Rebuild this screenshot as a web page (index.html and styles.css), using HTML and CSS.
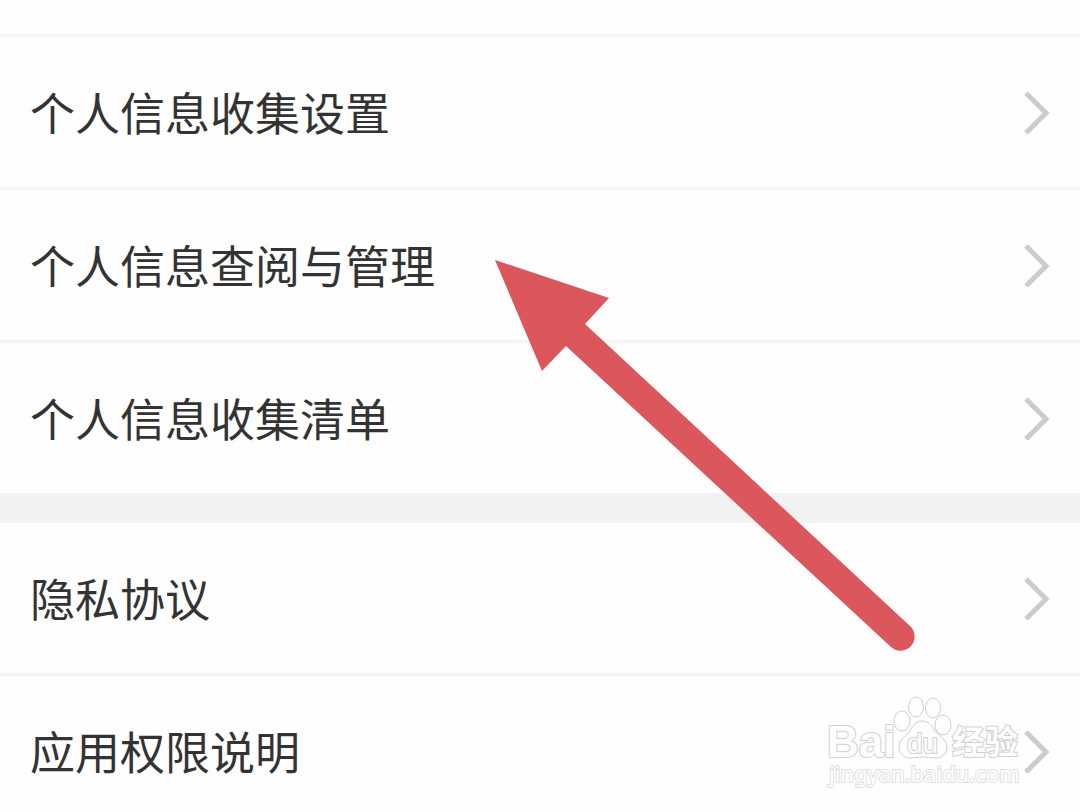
FILE: index.html
```html
<!DOCTYPE html>
<html lang="zh-CN">
<head>
    <meta charset="UTF-8">
    <meta name="viewport" content="width=device-width, initial-scale=1.0">
    <title>隐私设置</title>
    <link rel="stylesheet" href="styles.css">
</head>
<body>
    <svg class="symbols" aria-hidden="true">
        <symbol id="chevron" viewBox="0 0 26 44">
            <path d="M2 3 L22 23 L2 43" fill="none" stroke="#cccccc" stroke-width="5"/>
        </symbol>
    </svg>

    <nav class="settings">
        <div class="group">
            <a class="row" href="#collect">个人信息收集设置<svg class="chevron"><use href="#chevron"/></svg></a>
            <a class="row" href="#manage">个人信息查阅与管理<svg class="chevron"><use href="#chevron"/></svg></a>
            <a class="row" href="#list">个人信息收集清单<svg class="chevron"><use href="#chevron"/></svg></a>
        </div>
        <div class="group">
            <a class="row" href="#privacy">隐私协议<svg class="chevron"><use href="#chevron"/></svg></a>
            <a class="row" href="#permissions">应用权限说明<svg class="chevron"><use href="#chevron"/></svg></a>
        </div>
    </nav>

    <svg class="arrow" viewBox="0 0 420 392" aria-hidden="true">
        <path d="M0 0 L114 38 L90 64 L415 366 A14 14 0 0 1 396 387 L71 86 L47 111 Z" fill="#db575c"/>
    </svg>

    <svg class="watermark" viewBox="0 0 200 96" role="img" aria-label="Baidu 经验">
        <text class="mark-bai" x="-1" y="61">Bai</text>
        <ellipse cx="74" cy="25" rx="8" ry="10"/>
        <ellipse cx="88" cy="11" rx="7.5" ry="10"/>
        <ellipse cx="105" cy="12" rx="7.5" ry="10"/>
        <ellipse cx="115" cy="29" rx="8" ry="10"/>
        <path d="M94 25 C86 25 84 33 79 38 C74 43 71 46 71 52 C71 59 77 62 83 62 C88 62 90 61 94 61 C99 61 102 62 107 62 C114 62 119 58 119 51 C119 45 114 42 109 37 C104 32 102 25 94 25 Z"/>
        <text class="mark-du" x="79" y="57">du</text>
        <text class="mark-cn" x="124" y="58">经验</text>
        <text class="mark-url" x="1" y="86">jingyan.baidu.com</text>
    </svg>
</body>
</html>
```

FILE: styles.css
```css
* {
    box-sizing: border-box;
}

body {
    position: relative;
    height: 100vh;
    margin: 0;
    overflow: hidden;
    background-color: #fefefe;
    color: #333;
    font-family: "Noto Sans CJK SC", sans-serif;
}

.symbols {
    position: absolute;
    width: 0;
    height: 0;
}

.settings {
    padding-top: 34px;
}

.group:first-child {
    border-top: 3px solid #f5f5f5;
}

.group + .group {
    border-top: 30px solid #f2f2f2;
}

.row {
    display: flex;
    align-items: center;
    justify-content: space-between;
    height: 150px;
    padding: 0 30px;
    color: inherit;
    font-size: 45px;
    line-height: 60px;
    text-decoration: none;
}

.row + .row {
    height: 153px;
    border-top: 3px solid #f5f5f5;
}

.chevron {
    flex: none;
    width: 26px;
    height: 44px;
    overflow: visible;
}

/* overlays */
.arrow {
    position: absolute;
    top: 260px;
    left: 495px;
    width: 420px;
    height: 392px;
}

.watermark {
    position: absolute;
    top: 696px;
    left: 828px;
    width: 200px;
    height: 96px;
    overflow: visible;
    fill: #fefefe;
    stroke: #cfcfcf;
    stroke-width: 1px;
}

.watermark text {
    paint-order: stroke;
    stroke-width: 2px;
}

.mark-bai {
    font: bold 44px "Liberation Sans", sans-serif;
}

.mark-du {
    font: 28px "Liberation Sans", sans-serif;
}

.mark-cn {
    font: bold 33px "Noto Sans CJK SC", sans-serif;
}

.watermark .mark-url {
    font: 22px "Noto Sans", sans-serif;
    stroke: #e0e0e0;
}
```
